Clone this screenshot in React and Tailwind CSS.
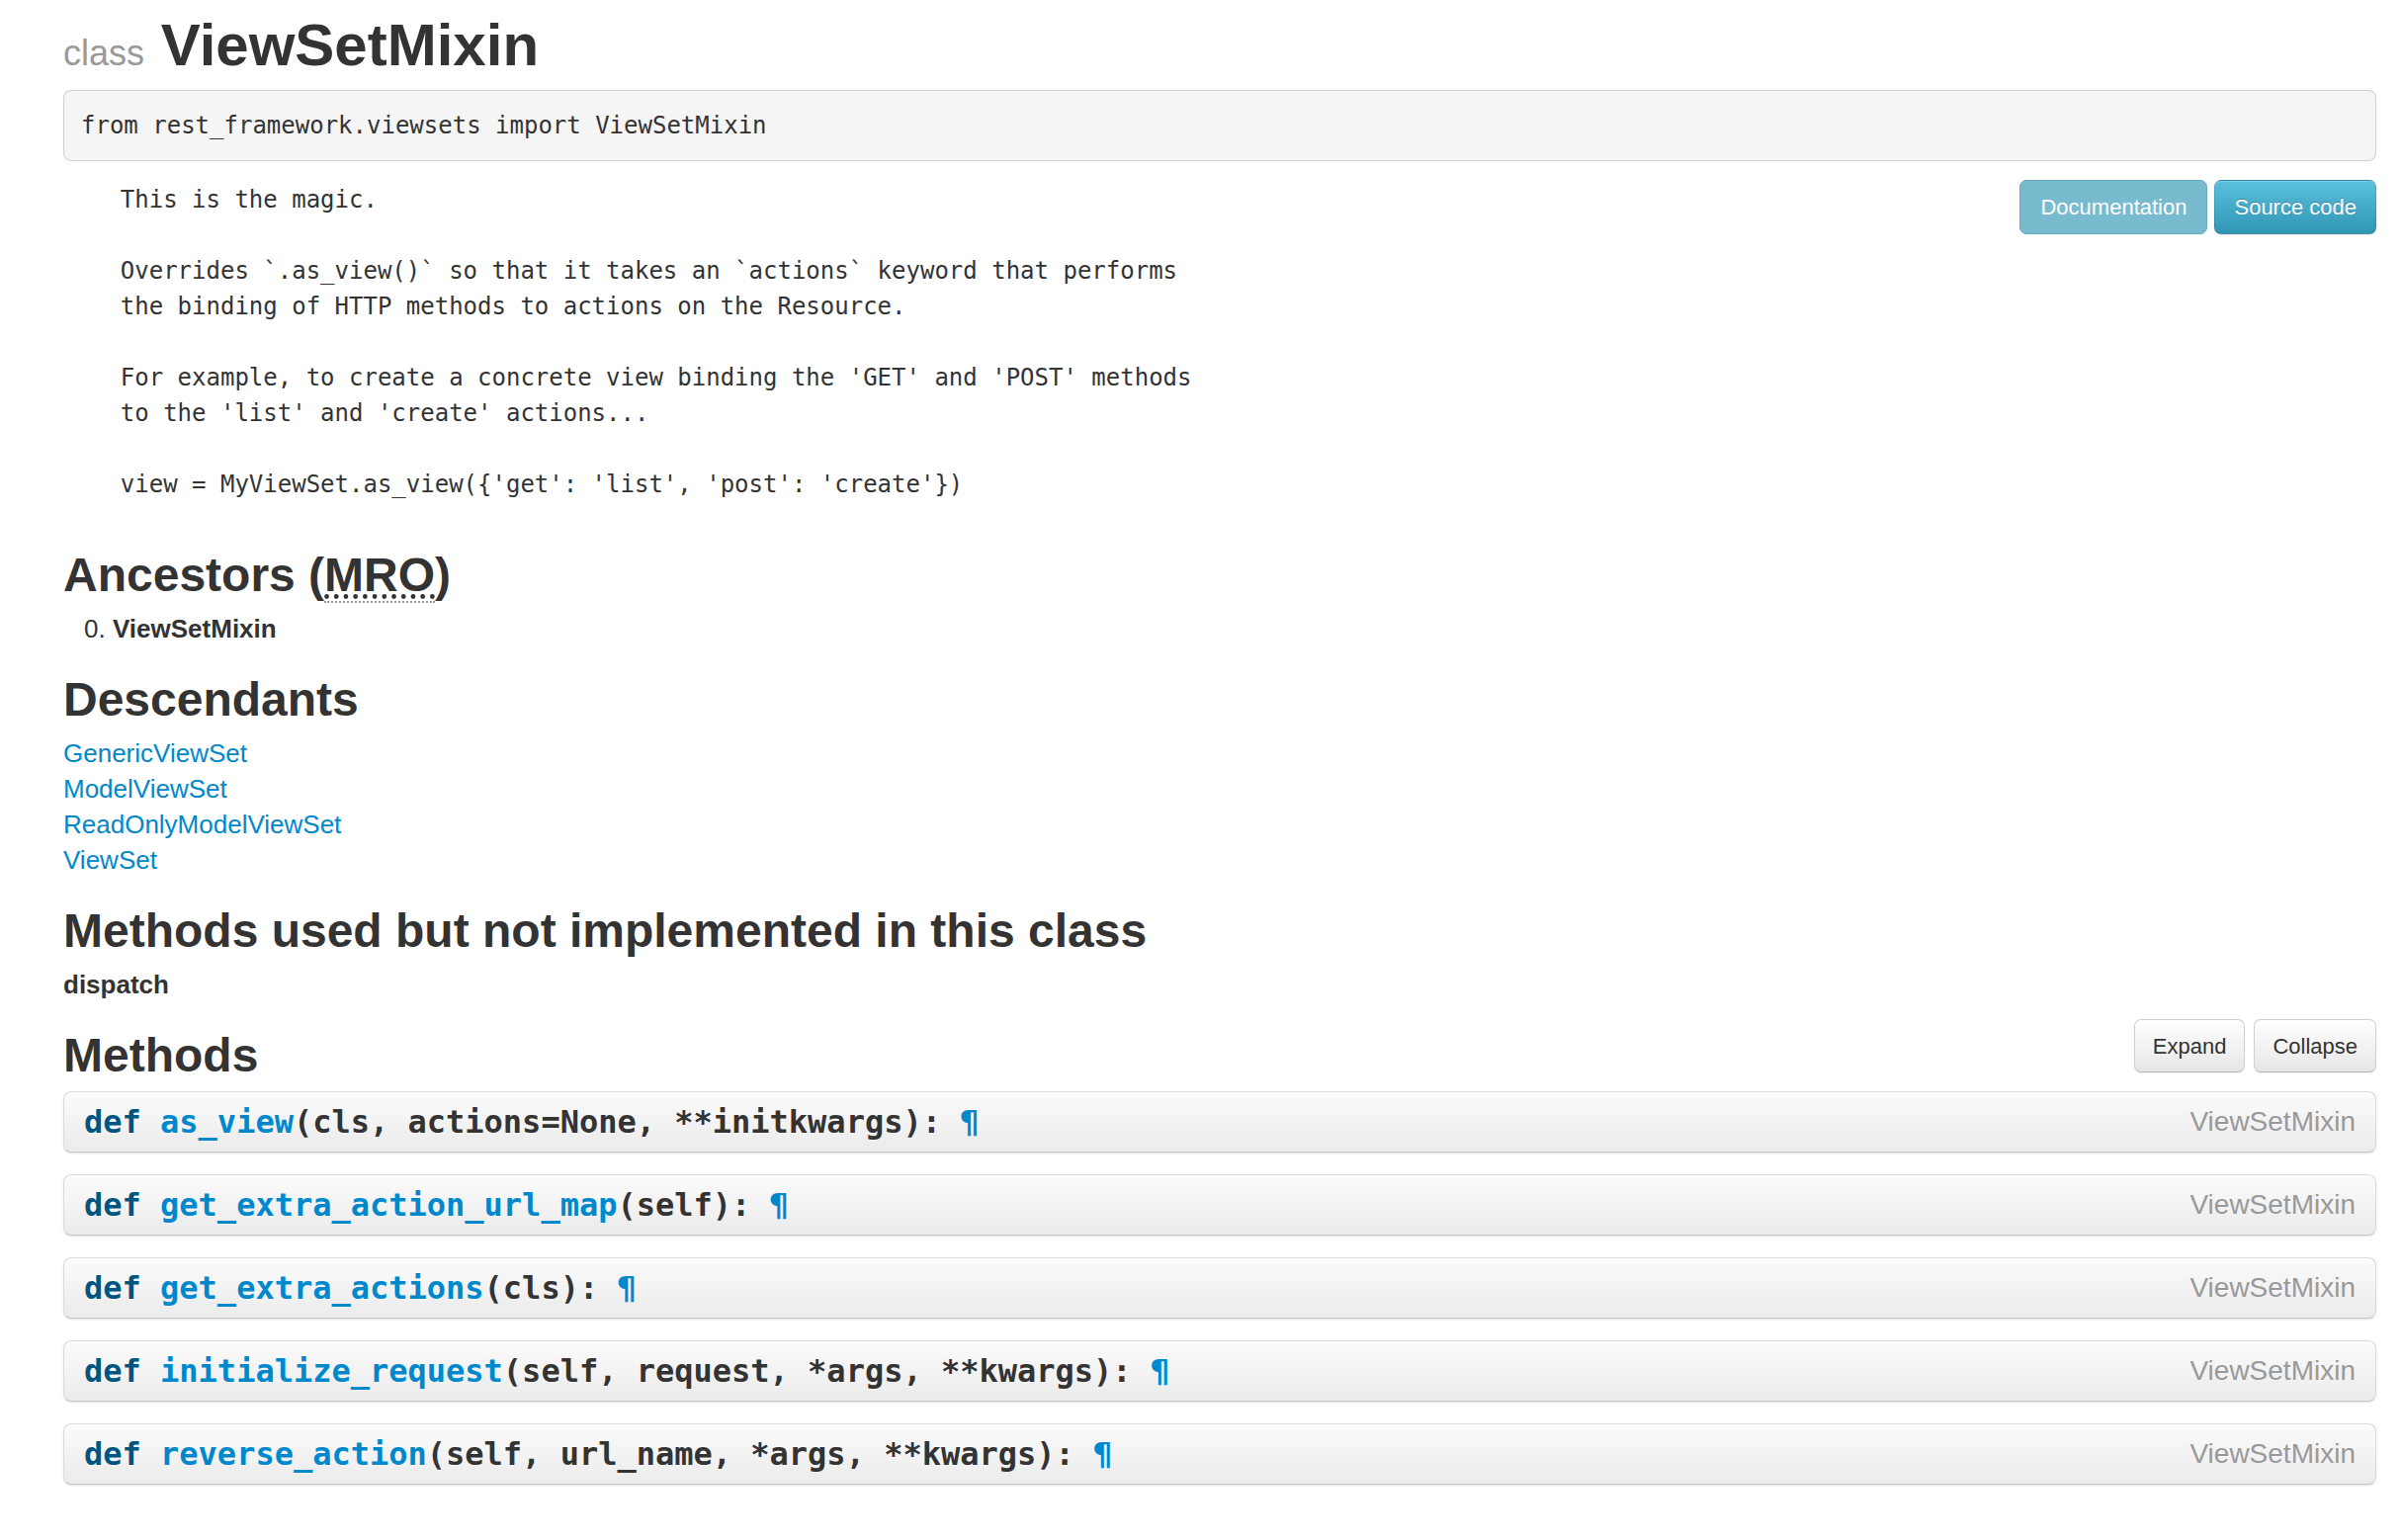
const mono = "font-['DejaVu_Sans_Mono','Liberation_Mono',monospace]";

const docstring = `    This is the magic.

    Overrides \`.as_view()\` so that it takes an \`actions\` keyword that performs
    the binding of HTTP methods to actions on the Resource.

    For example, to create a concrete view binding the 'GET' and 'POST' methods
    to the 'list' and 'create' actions...

    view = MyViewSet.as_view({'get': 'list', 'post': 'create'})`;

const descendants = ['GenericViewSet', 'ModelViewSet', 'ReadOnlyModelViewSet', 'ViewSet'];

const methods = [
  { name: 'as_view', args: 'cls, actions=None, **initkwargs' },
  { name: 'get_extra_action_url_map', args: 'self' },
  { name: 'get_extra_actions', args: 'cls' },
  { name: 'initialize_request', args: 'self, request, *args, **kwargs' },
  { name: 'reverse_action', args: 'self, url_name, *args, **kwargs' },
];

function GrayButton({ children }) {
  return (
    <button className="h-[54px] px-[18px] rounded-[7px] border border-[#cfcfcf] border-b-[#b5b5b5] bg-linear-to-b from-white to-[#e6e6e6] text-[22px] text-[#333] shadow-[inset_0_1px_0_rgba(255,255,255,0.2),0_1px_2px_rgba(0,0,0,0.05)]">
      {children}
    </button>
  );
}

function MethodRow({ name, args }) {
  return (
    <div className="h-[62px] mb-[22px] flex items-center justify-between pl-[20px] pr-[20px] rounded-[8px] border border-[#dadada] border-b-[#c6c6c6] bg-linear-to-b from-[#fbfbfb] to-[#ebebeb] shadow-[0_1px_2px_rgba(0,0,0,0.12)]">
      <div className={`${mono} text-[32px] leading-[40px] font-bold text-[#333] whitespace-pre`}>
        <span className="text-[#005580]">def</span> <span className="text-[#0088cc]">{name}</span>({args}): <span className="text-[#0088cc]">¶</span>
      </div>
      <span className="text-[28px] text-[#999]">ViewSetMixin</span>
    </div>
  );
}

export default function App() {
  return (
    <div className="min-h-screen bg-white text-[#333] font-['Liberation_Sans',Arial,sans-serif]">
      <div className="ml-[64px] mr-[24px] pt-[10px]">
        <h1 className="text-[60px] leading-[72px] font-bold mb-[9px]">
          <span className="text-[36px] leading-none font-normal text-[#999]">class</span> ViewSetMixin
        </h1>

        <pre className={`${mono} text-[24px] leading-[36px] p-[17px] bg-[#f5f5f5] border border-black/15 rounded-[8px] mb-[18px]`}>
          from rest_framework.viewsets import ViewSetMixin
        </pre>

        <div className="flex items-start justify-between mb-[38px]">
          <pre className={`${mono} text-[24px] leading-[36px] pt-[3px] whitespace-pre`}>{docstring}</pre>
          <div className="flex gap-[7px] mt-[1px] shrink-0">
            <button className="h-[55px] px-[20px] rounded-[7px] border border-[#6aa9bc] bg-[#78bace] text-[22px] text-white">
              Documentation
            </button>
            <button className="h-[55px] px-[19px] rounded-[7px] border border-black/10 border-b-black/25 bg-linear-to-b from-[#5bc0de] to-[#2f96b4] text-[22px] text-white [text-shadow:0_-1px_0_rgba(0,0,0,0.25)] shadow-[inset_0_1px_0_rgba(255,255,255,0.2),0_1px_2px_rgba(0,0,0,0.1)]">
              Source code
            </button>
          </div>
        </div>

        <h2 className="text-[48px] leading-[72px] font-bold">
          Ancestors (
          <abbr className="underline decoration-dotted border-b-2 border-dotted border-[#999]" title="Method Resolution Order">MRO</abbr>
          )
        </h2>
        <ol start={0} className="list-decimal ml-[50px] mb-[18px] text-[26px] leading-[36px]">
          <li><b>ViewSetMixin</b></li>
        </ol>

        <h2 className="text-[48px] leading-[72px] font-bold">Descendants</h2>
        <div className="mb-[18px] text-[26px] leading-[36px]">
          {descendants.map((d) => (
            <div key={d}><a className="text-[#0088cc]" href="#">{d}</a></div>
          ))}
        </div>

        <h2 className="text-[48px] leading-[72px] font-bold">Methods used but not implemented in this class</h2>
        <div className="mb-[18px] text-[26px] leading-[36px] font-bold">dispatch</div>

        <div className="flex items-start justify-between">
          <h2 className="text-[48px] leading-[72px] font-bold">Methods</h2>
          <div className="flex gap-[9px] mt-[-1px]">
            <GrayButton>Expand</GrayButton>
            <GrayButton>Collapse</GrayButton>
          </div>
        </div>

        <div>
          {methods.map((m) => (
            <MethodRow key={m.name} {...m} />
          ))}
        </div>
      </div>
    </div>
  );
}
